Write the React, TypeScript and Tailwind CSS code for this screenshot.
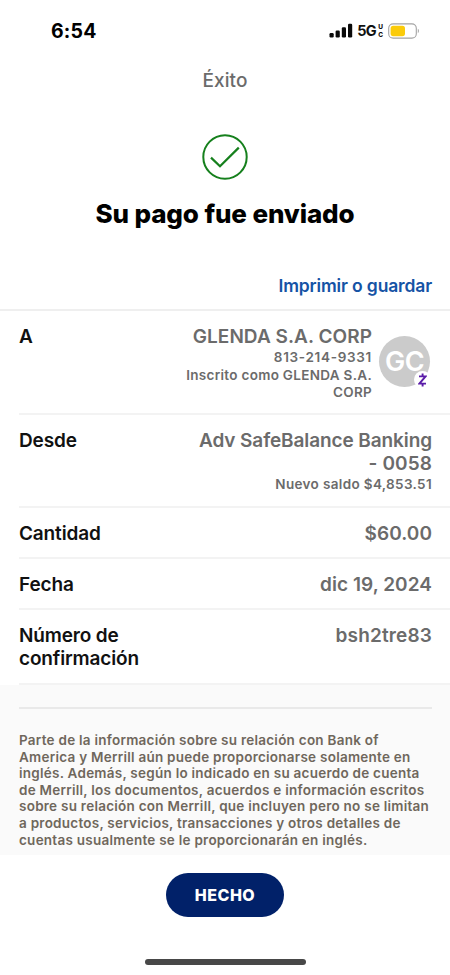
import React from 'react';

interface DetailRowProps {
  label: React.ReactNode;
  className: string;
  children: React.ReactNode;
}

const DetailRow: React.FC<DetailRowProps> = ({ label, className, children }) => (
  <div className={`ml-[19px] flex justify-between border-b-2 border-[#f3f3f3] pt-[14px] pr-[18px] ${className}`}>
    <dt className="text-[19px] leading-[23px] font-semibold tracking-[-0.15px] text-[#111]">{label}</dt>
    <dd className="text-right text-[19px] leading-[23px] font-semibold tracking-[0.05px] text-[#6b6b6b]">{children}</dd>
  </div>
);

const StatusBar: React.FC = () => (
  <header className="flex h-[61px] items-center justify-between pr-[30px] pl-[51px]">
    <span className="text-[19.5px] leading-6 font-bold tracking-[0.2px] text-black">6:54</span>
    <div className="flex items-center">
      <svg className="h-[15px] w-[24px]" viewBox="0 0 24 15" fill="#0a0a0a">
        <rect x="0.5" y="10" width="4.2" height="4.5" rx="1.2" />
        <rect x="6.6" y="7.5" width="4.2" height="7" rx="1.2" />
        <rect x="12.8" y="4.2" width="4.2" height="10.3" rx="1.2" />
        <rect x="19" y="0.7" width="4.2" height="13.8" rx="1.2" />
      </svg>
      <span className="ml-1 text-[14.5px] leading-5 font-bold tracking-[-0.6px] text-[#111]">5G</span>
      <span className="ml-[2px] flex flex-col text-[6.5px] leading-[8px] font-extrabold text-[#111]">
        <span>U</span>
        <span>C</span>
      </span>
      <svg className="ml-[5px] h-[16px] w-[32px]" viewBox="0 0 32 16" fill="none">
        <rect x="0.7" y="0.9" width="27.6" height="14.2" rx="4.4" stroke="#a3a3a3" strokeWidth="1.1" />
        <rect x="2.6" y="2.8" width="14.4" height="10.4" rx="2.6" fill="#fbcb0a" />
        <path d="M29.8 5.8c1.5.6 1.5 3.8 0 4.4z" fill="#a3a3a3" />
      </svg>
    </div>
  </header>
);

const Avatar: React.FC = () => (
  <div className="relative mt-[11px] ml-[7px] flex size-[51px] items-center justify-center rounded-full bg-[#cbcbcb]">
    <span className="text-[27px] leading-none font-semibold tracking-[-0.5px] text-white">GC</span>
    <span className="absolute right-[-1px] bottom-[-1px] flex size-[17px] items-center justify-center rounded-full bg-white">
      <svg className="h-[14px] w-[9px]" viewBox="0 0 9 14" fill="none" stroke="#5a1ca8" strokeWidth="1.9">
        <path d="M1 3.4h6.6L1.4 10.6H8" />
        <path d="M4.6 0.6v2.8M4.6 10.6v2.8" />
      </svg>
    </span>
  </div>
);

const App: React.FC = () => {
  return (
    <div className="flex h-[975px] w-[450px] flex-col bg-white font-['Inter',sans-serif]">
      <StatusBar />
      <h1 className="mt-[8px] text-center text-[19px] leading-6 font-medium tracking-[0.1px] text-[#6b6b6b]">Éxito</h1>

      {/* Confirmation */}
      <div className="mt-[41px] flex flex-col items-center">
        <svg className="size-[46px]" viewBox="0 0 46 46" fill="none" stroke="#16801d" strokeWidth="2">
          <circle cx="23" cy="23" r="21.7" />
          <path d="M9 23.6l9 8.6L36.8 13.6" strokeWidth="2.2" />
        </svg>
        <h2 className="mt-[18px] text-[26px] leading-8 font-extrabold tracking-[-0.12px] text-black">Su pago fue enviado</h2>
      </div>
      <div className="mt-[44px] flex h-[35px] justify-end pr-[18px]">
        <button className="h-6 text-[17.5px] leading-6 font-semibold tracking-[-0.15px] text-[#1553a5]">Imprimir o guardar</button>
      </div>

      <dl className="border-t-2 border-[#efefef]">
        <DetailRow label="A" className="h-[104px]">
          <div className="mr-[2px] flex">
            <div>
              GLENDA S.A. CORP
              <div className="text-[13.5px] leading-[18px] tracking-[0.7px]">813-214-9331</div>
              <div className="mt-px text-[13.5px] leading-[16.5px] tracking-[0.3px]">
                Inscrito como GLENDA S.A.
                <br />
                CORP
              </div>
            </div>
            <Avatar />
          </div>
        </DetailRow>
        <DetailRow label="Desde" className="h-[93px]">
          <span className="tracking-[-0.1px]">Adv SafeBalance Banking</span>
          <br />
          <span className="tracking-[0.1px]">- 0058</span>
          <div className="text-[13.5px] leading-[19px] tracking-[0.35px]">Nuevo saldo $4,853.51</div>
        </DetailRow>
        <DetailRow label="Cantidad" className="h-[51px]">$60.00</DetailRow>
        <DetailRow label="Fecha" className="h-[51px]">dic 19, 2024</DetailRow>
        <DetailRow label={<>Número de<br />confirmación</>} className="h-[75px]">
          <span className="tracking-[0.15px]">bsh2tre83</span>
        </DetailRow>
      </dl>

      {/* Language disclosure */}
      <section className="h-[170px] bg-[#fafafa] pt-[22px] pr-[18px] pl-[19px]">
        <p className="border-t-2 border-[#e9e9e9] pt-[23px] text-[13.5px] leading-[16.6px] font-semibold tracking-[0.25px] whitespace-nowrap text-[#6f675c]">
          Parte de la información sobre su relación con Bank of<br />
          America y Merrill aún puede proporcionarse solamente en<br />
          inglés. Además, según lo indicado en su acuerdo de cuenta<br />
          de Merrill, los documentos, acuerdos e información escritos<br />
          sobre su relación con Merrill, que incluyen pero no se limitan<br />
          a productos, servicios, transacciones y otros detalles de<br />
          cuentas usualmente se le proporcionarán en inglés.
        </p>
      </section>

      <footer className="flex flex-col items-center pt-[18px]">
        <button className="h-[44px] w-[118px] rounded-full bg-[#012169] text-[16px] font-extrabold tracking-[0.5px] text-white">HECHO</button>
        <div className="mt-[42px] h-[6px] w-[161px] rounded-full bg-[#484848]" />
      </footer>
    </div>
  );
};

export default App;
